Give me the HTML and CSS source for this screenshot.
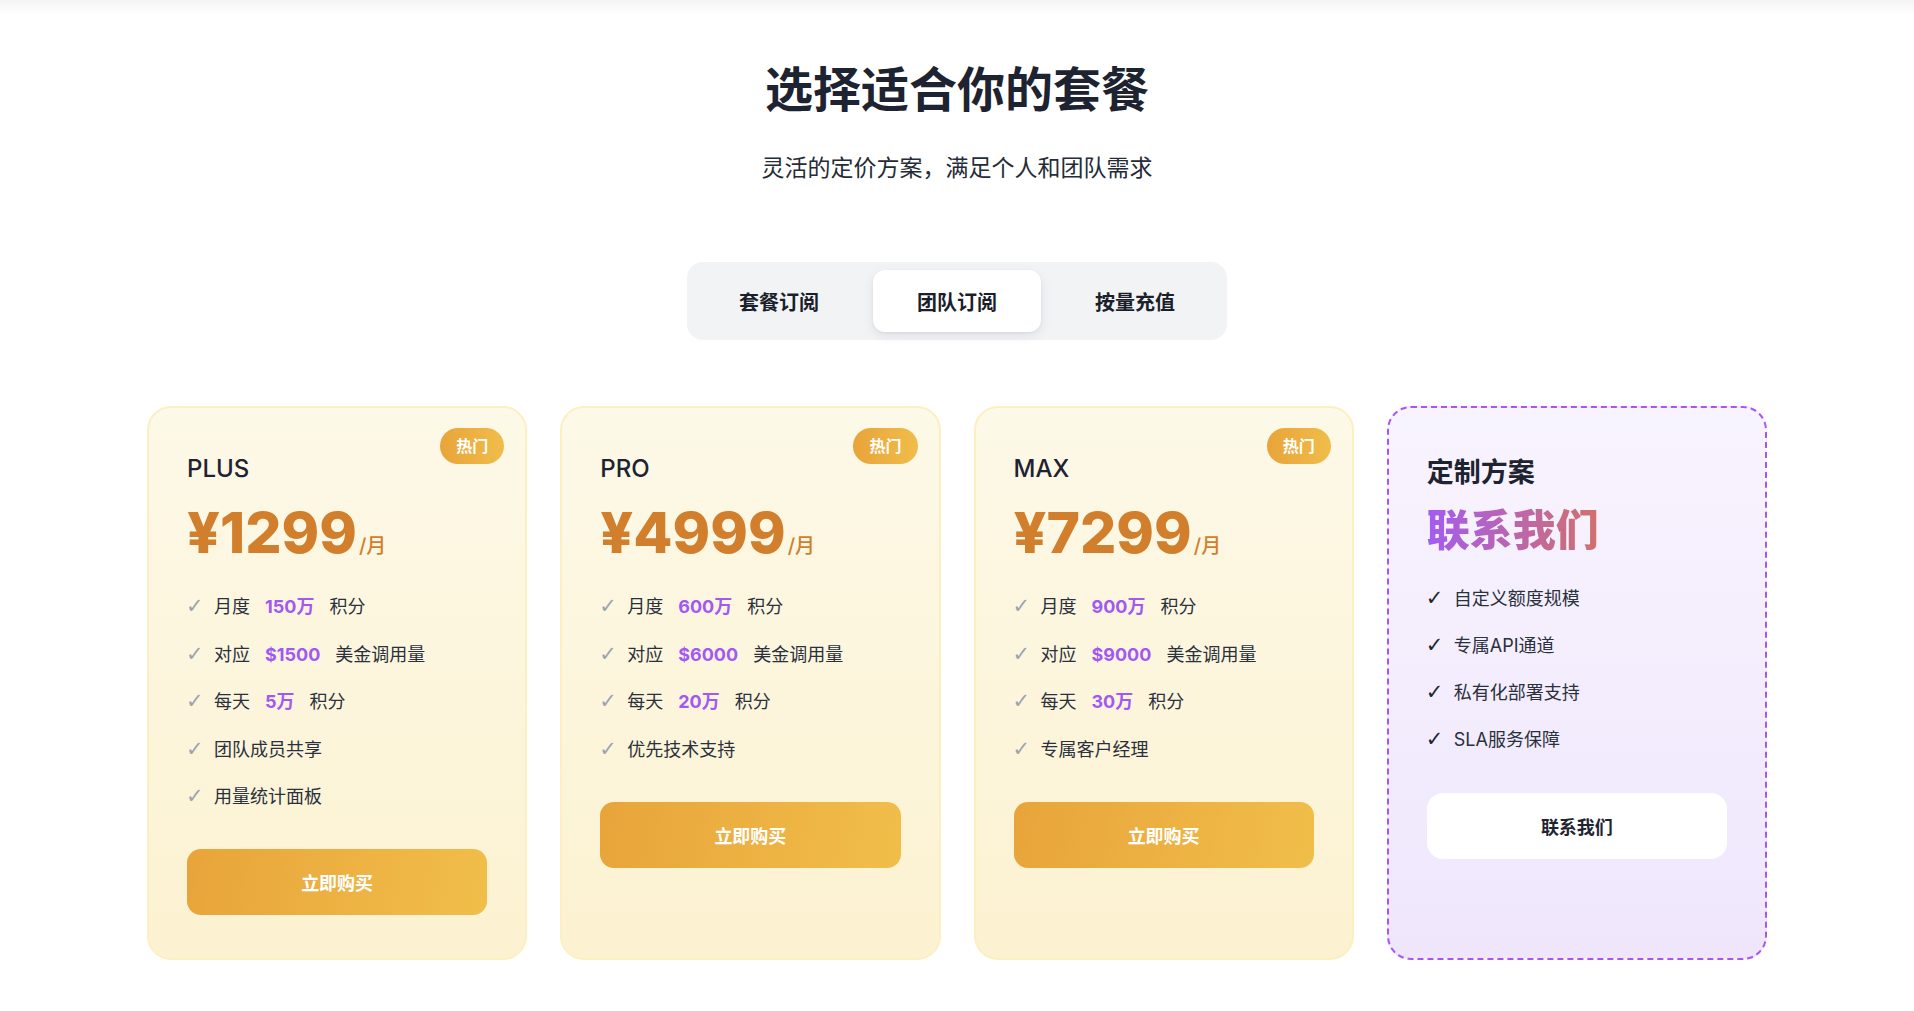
FILE: index.html
```html
<!DOCTYPE html>
<html lang="zh-CN">
<head>
<meta charset="utf-8">
<title>选择适合你的套餐</title>
<link rel="stylesheet" href="styles.css">
</head>
<body>
<main class="page">
  <h1 class="title">选择适合你的套餐</h1>
  <p class="subtitle">灵活的定价方案，满足个人和团队需求</p>

  <div class="tabs">
    <button class="tab">套餐订阅</button>
    <button class="tab active">团队订阅</button>
    <button class="tab">按量充值</button>
  </div>

  <div class="cards">
    <div class="card plan">
      <span class="badge">热门</span>
      <div class="plan-name">PLUS</div>
      <div class="price"><span class="amount">¥1299</span><span class="unit">/月</span></div>
      <ul class="features">
        <li><span class="check">✓</span><span>月度</span><span class="hl">150万</span><span>积分</span></li>
        <li><span class="check">✓</span><span>对应</span><span class="hl">$1500</span><span>美金调用量</span></li>
        <li><span class="check">✓</span><span>每天</span><span class="hl">5万</span><span>积分</span></li>
        <li><span class="check">✓</span><span>团队成员共享</span></li>
        <li><span class="check">✓</span><span>用量统计面板</span></li>
      </ul>
      <button class="buy">立即购买</button>
    </div>

    <div class="card plan">
      <span class="badge">热门</span>
      <div class="plan-name">PRO</div>
      <div class="price"><span class="amount">¥4999</span><span class="unit">/月</span></div>
      <ul class="features">
        <li><span class="check">✓</span><span>月度</span><span class="hl">600万</span><span>积分</span></li>
        <li><span class="check">✓</span><span>对应</span><span class="hl">$6000</span><span>美金调用量</span></li>
        <li><span class="check">✓</span><span>每天</span><span class="hl">20万</span><span>积分</span></li>
        <li><span class="check">✓</span><span>优先技术支持</span></li>
      </ul>
      <button class="buy">立即购买</button>
    </div>

    <div class="card plan">
      <span class="badge">热门</span>
      <div class="plan-name">MAX</div>
      <div class="price"><span class="amount">¥7299</span><span class="unit">/月</span></div>
      <ul class="features">
        <li><span class="check">✓</span><span>月度</span><span class="hl">900万</span><span>积分</span></li>
        <li><span class="check">✓</span><span>对应</span><span class="hl">$9000</span><span>美金调用量</span></li>
        <li><span class="check">✓</span><span>每天</span><span class="hl">30万</span><span>积分</span></li>
        <li><span class="check">✓</span><span>专属客户经理</span></li>
      </ul>
      <button class="buy">立即购买</button>
    </div>

    <div class="card custom">
      <div class="custom-name">定制方案</div>
      <div class="contact-title"><span class="grad">联系我们</span></div>
      <ul class="features custom-features">
        <li><span class="check dark">✓</span><span>自定义额度规模</span></li>
        <li><span class="check dark">✓</span><span>专属API通道</span></li>
        <li><span class="check dark">✓</span><span>私有化部署支持</span></li>
        <li><span class="check dark">✓</span><span>SLA服务保障</span></li>
      </ul>
      <button class="contact-btn">联系我们</button>
    </div>
  </div>
</main>
</body>
</html>
```

FILE: styles.css
```css
* { box-sizing: border-box; }

html, body {
  margin: 0;
  padding: 0;
}

body {
  font-family: "Inter", "Noto Sans CJK SC", sans-serif;
  color: #1f2937;
  background: #ffffff linear-gradient(180deg, #f4f4f4 0px, #ffffff 14px) no-repeat;
}

.page {
  padding: 62px 0 40px;
  text-align: center;
}

.title {
  margin: 0;
  font-size: 48px;
  line-height: 56px;
  font-weight: 700;
  color: #1d2330;
}

.subtitle {
  margin: 34px 0 0;
  font-size: 23px;
  line-height: 32px;
  font-weight: 400;
  color: #252b37;
}

.tabs {
  display: inline-flex;
  gap: 10px;
  margin-top: 78px;
  padding: 8px;
  background: #f2f3f5;
  border-radius: 16px;
}

.tab {
  width: 168px;
  height: 62px;
  border: 0;
  border-radius: 12px;
  background: transparent;
  font-family: "Inter", "Noto Sans CJK SC", sans-serif;
  font-size: 20px;
  font-weight: 700;
  color: #1a1f2b;
  cursor: pointer;
}

.tab.active {
  background: #ffffff;
  box-shadow: 0 4px 12px rgba(15, 23, 42, 0.08), 0 1px 3px rgba(15, 23, 42, 0.06);
}

.cards {
  display: grid;
  grid-template-columns: repeat(4, 1fr);
  gap: 33px;
  max-width: 1620px;
  margin: 66px auto 0;
  text-align: left;
}

.card {
  position: relative;
  border-radius: 24px;
  padding: 45px 38px 43px;
}

.plan {
  border: 2px solid #fcefc2;
  background: linear-gradient(180deg, #fdf9e8 0%, #fcf2d1 100%);
}

.badge {
  position: absolute;
  top: 20px;
  right: 21px;
  height: 36px;
  padding: 0 16px;
  border-radius: 18px;
  background: linear-gradient(90deg, #e8a43a, #f0bd4a);
  color: #ffffff;
  font-size: 16px;
  font-weight: 700;
  line-height: 36px;
}

.plan-name {
  font-size: 24px;
  line-height: 32px;
  font-weight: 500;
  color: #1d2330;
}

.price {
  display: flex;
  align-items: baseline;
  margin-top: 20px;
  line-height: 1;
  color: #d17e2d;
}

.amount {
  font-size: 57px;
  line-height: 56px;
  font-weight: 800;
}

.unit {
  font-size: 20px;
  font-weight: 500;
  margin-left: 2px;
}

.features {
  list-style: none;
  margin: 32px 0 0;
  padding: 0;
}

.features li {
  display: flex;
  align-items: center;
  gap: 15px;
  font-size: 18px;
  line-height: 27px;
  color: #2a303c;
}

.features li + li {
  margin-top: 20.6px;
}

.check {
  display: inline-block;
  font-family: "DejaVu Sans", sans-serif;
  font-size: 21px;
  color: #9ca3af;
  width: 13px;
  margin-left: -1px;
}

.check.dark {
  color: #1f2430;
}

.hl {
  color: #a259f3;
  font-weight: 700;
}

.buy {
  display: block;
  width: 100%;
  height: 66px;
  margin-top: 39px;
  border: 0;
  border-radius: 14px;
  background: linear-gradient(100deg, #e8a43a 0%, #f1be4a 100%);
  color: #ffffff;
  font-family: "Inter", "Noto Sans CJK SC", sans-serif;
  font-size: 18px;
  font-weight: 700;
  cursor: pointer;
}

.custom {
  border: 2px dashed #a855f7;
  background: linear-gradient(180deg, #f8f4fe 0%, #efe6fc 100%);
  padding-top: 49px;
}

.custom-name {
  font-size: 27px;
  line-height: 32px;
  font-weight: 700;
  color: #1d2330;
}

.contact-title {
  margin-top: 15px;
  font-size: 43px;
  line-height: 52px;
  font-weight: 900;
}

.grad {
  background: linear-gradient(90deg, #a35cf0 0%, #d2706b 100%);
  -webkit-background-clip: text;
  background-clip: text;
  color: transparent;
}

.custom-features {
  margin-top: 28.5px;
}

.custom-features li + li {
  margin-top: 20.2px;
}

.contact-btn {
  display: block;
  width: 100%;
  height: 66px;
  margin-top: 40px;
  border: 0;
  border-radius: 16px;
  background: #ffffff;
  color: #1f2430;
  font-family: "Inter", "Noto Sans CJK SC", sans-serif;
  font-size: 18px;
  font-weight: 700;
  cursor: pointer;
}
```
